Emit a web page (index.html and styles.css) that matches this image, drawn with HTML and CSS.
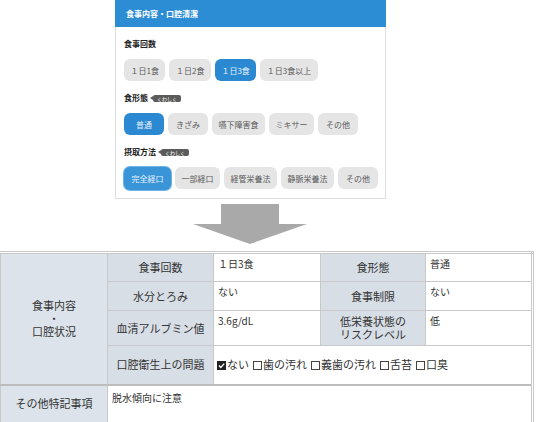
FILE: index.html
```html
<!DOCTYPE html>
<html lang="ja">
<head>
<meta charset="utf-8">
<link rel="stylesheet" href="styles.css">
</head>
<body>
<div class="top">
  <section class="card">
    <header class="card-head">食事内容・口腔清潔</header>
    <div class="card-body">
      <div class="field">
        <div class="label">食事回数</div>
        <div class="btns">
          <span class="btn">１日1食</span>
          <span class="btn">１日2食</span>
          <span class="btn on">１日3食</span>
          <span class="btn">１日3食以上</span>
        </div>
      </div>
      <div class="field">
        <div class="label">食形態<span class="tag">くわしく</span></div>
        <div class="btns">
          <span class="btn on">普通</span>
          <span class="btn">きざみ</span>
          <span class="btn">嚥下障害食</span>
          <span class="btn">ミキサー</span>
          <span class="btn">その他</span>
        </div>
      </div>
      <div class="field">
        <div class="label">摂取方法<span class="tag">くわしく</span></div>
        <div class="btns">
          <span class="btn on lit">完全経口</span>
          <span class="btn">一部経口</span>
          <span class="btn">経管栄養法</span>
          <span class="btn">静脈栄養法</span>
          <span class="btn">その他</span>
        </div>
      </div>
    </div>
  </section>
  <div class="arrow">
    <svg width="114" height="40" viewBox="0 0 114 40"><path d="M28 0H86V20H114L57 40L0 20H28Z" fill="#a9a9a9"/></svg>
  </div>
</div>
<table class="summary">
  <colgroup>
    <col class="c1"><col class="c2"><col class="c3"><col class="c4"><col>
  </colgroup>
  <tr class="r1">
    <th rowspan="4" class="group">食事内容<br>・<br>口腔状況</th>
    <th>食事回数</th><td>１日3食</td>
    <th>食形態</th><td>普通</td>
  </tr>
  <tr class="r2">
    <th>水分とろみ</th><td>ない</td>
    <th>食事制限</th><td>ない</td>
  </tr>
  <tr class="r3">
    <th class="two">血清アルブミン値</th><td>3.6g/dL</td>
    <th class="two">低栄養状態の<br>リスクレベル</th><td>低</td>
  </tr>
  <tr class="r4">
    <th>口腔衛生上の問題</th>
    <td colspan="3" class="checks"><span class="item"><span class="cb on"><svg width="9" height="9" viewBox="0 0 9 9"><path d="M2 4.6L3.8 6.4L7.2 2.6" fill="none" stroke="#fff" stroke-width="1.4"/></svg></span>ない</span><span class="item"><span class="cb"></span>歯の汚れ</span><span class="item"><span class="cb"></span>義歯の汚れ</span><span class="item"><span class="cb"></span>舌苔</span><span class="item"><span class="cb"></span>口臭</span></td>
  </tr>
  <tr class="r5">
    <th class="group">その他特記事項</th>
    <td colspan="4">脱水傾向に注意</td>
  </tr>
</table>
</body>
</html>
```
FILE: styles.css
```css
* { box-sizing: border-box; }
html, body { margin: 0; padding: 0; background: #fff; }
body {
  font-family: "Noto Sans CJK JP", "Noto Sans", sans-serif;
  color: #333;
  width: 536px;
  height: 422px;
  overflow: hidden;
}
.top { width: 271px; margin-left: 115px; }
.card {
  border: 1px solid #dedede;
  border-top: none;
  background: #fff;
}
.card-head {
  height: 27px;
  margin: 0 -1px;
  background: #2c8dd5;
  color: #fff;
  font-size: 8px;
  font-weight: bold;
  line-height: 27px;
  padding-left: 11px;
}
.card-body { padding: 11px 2px 8px 8px; }
.field + .field { margin-top: 11px; }
.label {
  display: flex;
  align-items: center;
  font-size: 8px;
  font-weight: bold;
  line-height: 12px;
  height: 12px;
  margin-bottom: 9px;
  color: #222;
}
.tag {
  position: relative;
  display: inline-block;
  margin-left: 5px;
  background: #5b5b5b;
  color: #fff;
  font-size: 5px;
  font-weight: normal;
  line-height: 7px;
  height: 7px;
  padding: 0 4px;
  border-radius: 2px;
}
.tag::before {
  content: "";
  position: absolute;
  left: -3px;
  top: 1.5px;
  border-top: 2px solid transparent;
  border-bottom: 2px solid transparent;
  border-right: 3px solid #5b5b5b;
}
.btns { display: flex; gap: 4px; flex-wrap: nowrap; }
.btn {
  display: inline-flex;
  align-items: center;
  justify-content: center;
  flex: none;
  white-space: nowrap;
  min-width: 40px;
  height: 22px;
  padding: 0 6.5px;
  border-radius: 6px;
  background: #e5e5e5;
  color: #5a5a5a;
  font-size: 8px;
}
.btn.on { background: #2b89d2; color: #e8f3fc; }
.btn.lit {
  background: #3a94d8;
  height: 23px;
  padding: 0 7.5px;
  box-shadow: 0 0 0 1px #6fb3e6;
}
.arrow {
  display: flex;
  justify-content: center;
  margin-top: 5px;
  margin-bottom: 7px;
  height: 40px;
  padding-right: 2px;
}
.arrow svg { display: block; }
.summary {
  width: 534px;
  border-collapse: collapse;
  border-top: 3px double #c9c9c9;
  border-right: 3px double #c9c9c9;
  table-layout: fixed;
}
.c1 { width: 107px; }
.c2 { width: 106px; }
.c3 { width: 107px; }
.c4 { width: 105px; }
.summary th, .summary td {
  border: 1px solid #c9c9c9;
  padding: 0;
}
.summary th {
  background: #d7dee6;
  font-weight: normal;
  font-size: 11px;
  line-height: 13px;
  text-align: center;
  vertical-align: middle;
  color: #333;
  white-space: nowrap;
}
.summary th.group { background: #dce3ea; line-height: 13px; }
.summary td {
  font-size: 10px;
  line-height: 13px;
  vertical-align: top;
  padding: 3px 4px;
  color: #333;
}
.r1 th, .r1 td { height: 29px; }
.r2 th, .r2 td { height: 29px; }
.r3 th, .r3 td { height: 35px; }
.r4 th, .r4 td { height: 39px; }
.r5 th, .r5 td { height: 38px; border-top: 2px solid #bdbdbd; }
.r5 td { padding-top: 5px; }
.summary td.checks {
  vertical-align: middle;
  font-size: 11px;
  padding-left: 3px;
  white-space: nowrap;
}
.item + .item { margin-left: 4px; }
.cb {
  display: inline-block;
  width: 9px;
  height: 9px;
  border: 1px solid #444;
  margin-right: 1px;
  vertical-align: -1px;
  background: #fff;
}
.cb.on { background: #222; border-color: #222; position: relative; }
.cb.on svg { position: absolute; left: -1px; top: -1px; }
```
